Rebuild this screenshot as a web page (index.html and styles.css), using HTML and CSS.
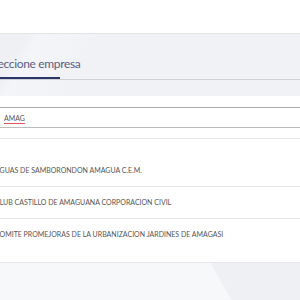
FILE: index.html
```html
<!DOCTYPE html>
<html lang="es">
<head>
    <meta charset="UTF-8">
    <title>Seleccione empresa</title>
    <link rel="stylesheet" href="styles.css">
</head>
<body>
    <header class="topbar"></header>

    <div class="band">
        <div class="tabs">
            <div class="tab active">Seleccione empresa</div>
        </div>
    </div>

    <main class="content">
        <div class="search">
            <span class="search-text">AMAG</span>
        </div>
        <ul class="results">
            <li>AGUAS DE SAMBORONDON AMAGUA C.E.M.</li>
            <li>CLUB CASTILLO DE AMAGUANA CORPORACION CIVIL</li>
            <li>COMITE PROMEJORAS DE LA URBANIZACION JARDINES DE AMAGASI</li>
        </ul>
    </main>

    <footer class="bottom"></footer>
</body>
</html>
```

FILE: styles.css
```css
body {
    margin: 0;
    font-family: 'Lato', 'Liberation Sans', sans-serif;
    background-color: #fff;
    overflow: hidden;
}

.topbar {
    height: 33px;
    background-color: #fff;
    border-bottom: 1px solid #e4e5ea;
}

.band {
    height: 62px;
    background: linear-gradient(120deg, #eef0f4 0%, #eef0f4 8%, #f4f5f8 12%, #f1f2f6 30%, #f1f2f6 100%);
}

.tabs {
    height: 45px;
    border-bottom: 1px solid #cfd1d6;
    display: flex;
}

.tab {
    margin-left: -17px;
    padding: 22px 0 0 0;
    height: 21px;
    font-size: 12px;
    letter-spacing: -0.35px;
    color: #596082;
    width: 77px;
    white-space: nowrap;
}

.tab.active {
    border-bottom: 2px solid #2b3668;
}

.content {
    padding: 11px 0 0 0;
    height: 155px;
    background-color: #fff;
}

.search {
    height: 19px;
    border-top: 1px solid #adadad;
    border-bottom: 1px solid #bcbcbc;
    display: flex;
    align-items: center;
    padding-left: 4px;
}

.search-text {
    font-size: 7px;
    color: #555;
    text-decoration: underline solid #e0525a;
    text-decoration-thickness: 1px;
    text-underline-offset: 2px;
}

.results {
    list-style: none;
    margin: 10px 0 0 0;
    padding: 16px 0 0 0;
    border-top: 1px solid #e8e8e8;
}

.results li {
    margin-left: -5px;
    height: 31px;
    line-height: 31px;
    font-size: 7px;
    color: #555;
    white-space: nowrap;
    border-bottom: 1px solid #e6e6e6;
}

.results li:last-child {
    border-bottom: none;
}

.bottom {
    height: 40px;
    border-top: 1px solid #e6e7ea;
    background: linear-gradient(60deg, #f7f8fa 0%, #f7f8fa 72%, #eef0f4 72.5%, #eef0f4 100%);
}
```
